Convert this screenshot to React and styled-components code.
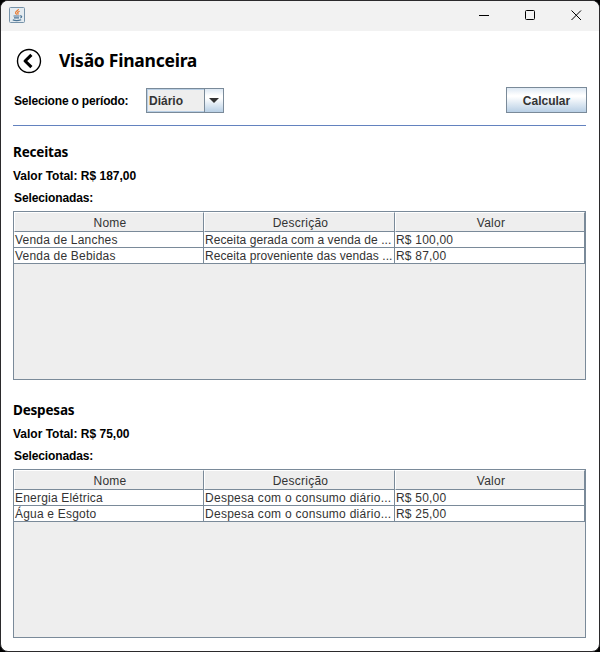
import React from "react";
import styled, { createGlobalStyle } from "styled-components";

const Global = createGlobalStyle`
  * { box-sizing: border-box; }
  html, body { margin: 0; background: #000; }
  body { width: 600px; height: 652px; overflow: hidden; font-family: "Liberation Sans", Arial, sans-serif; font-size: 12px; color: #333; }
`;

const Window = styled.div`
  width: 600px;
  height: 652px;
  display: flex;
  flex-direction: column;
  border: 1px solid #2b2a2c;
  border-radius: 8px;
  background: #fff;
  overflow: hidden;
`;

const TitleBar = styled.header`
  height: 30px;
  flex: none;
  display: flex;
  justify-content: space-between;
  padding: 6px 17px 0 8px;
  background: #f2f2f2;
`;

const Controls = styled.div`
  display: flex;
  gap: 35px;
  padding-top: 3px;
`;

const Content = styled.main`
  display: flex;
  flex-direction: column;
  padding: 17px 12px 0;
`;

const Heading = styled.div`
  display: flex;
  align-items: flex-start;
  height: 26px;
  padding-left: 3px;
`;

const Title = styled.h1`
  margin: 0 0 0 17px;
  font: 700 17.5px/24px "Noto Sans", sans-serif;
  letter-spacing: -0.25px;
  color: #000;
  white-space: nowrap;
`;

const Toolbar = styled.div`
  display: flex;
  height: 26px;
  margin-top: 13px;
  align-items: center;
`;

const Label = styled.div`
  height: 14px;
  line-height: 14px;
  margin-top: ${(p) => p.$top || 0}px;
  padding-left: ${(p) => p.$indent || 0}px;
  letter-spacing: ${(p) => p.$spacing || 0}px;
  font-weight: 700;
  color: #000;
  white-space: nowrap;
`;

const PeriodLabel = styled(Label)`
  width: 133px;
`;

const Combo = styled.div`
  display: flex;
  width: 78px;
  height: 25px;
  margin-top: 1px;
  border: 1px solid #7a8a99;
  background: #eee;
  box-shadow: inset 0 0 0 1px #b8cfe5;
  font-weight: 700;
  line-height: 24px;
`;

const ComboValue = styled.span`
  flex: 1;
  padding-left: 2px;
`;

const ComboArrow = styled.span`
  display: flex;
  align-items: center;
  justify-content: center;
  width: 19px;
  border-left: 1px solid #7a8a99;
  background: linear-gradient(#dde8f3, #fff 30%, #fff 40%, #b8cfe5);
`;

const Button = styled.button`
  width: 81px;
  height: 26px;
  margin-left: auto;
  padding: 2px 0 0;
  border: 1px solid #7a8a99;
  background: linear-gradient(#dde8f3, #fff 30%, #fff 36%, #b8cfe5);
  font: 700 12px "Liberation Sans", Arial, sans-serif;
  color: #333;
`;

const Rule = styled.hr`
  width: 573px;
  height: 1px;
  margin: 12px 0 0;
  border: 0;
  background: #6382bf;
`;

const Section = styled.section`
  height: 258px;
  padding-top: 16px;
`;

const SectionTitle = styled.h2`
  margin: 0;
  height: 21px;
  font: 700 13.5px/20px "Noto Sans", sans-serif;
  letter-spacing: -0.2px;
  color: #000;
`;

const TablePane = styled.div`
  width: 573px;
  height: 169px;
  margin-top: 6px;
  border: 1px solid #7a8a99;
  background: #eee;
`;

const Row = styled.div`
  display: grid;
  grid-template-columns: 190px 191px 190px;
  width: 571px;
`;

const HeadCell = styled.div`
  height: 20px;
  padding-left: 2px;
  border: solid;
  border-width: 1px;
  border-color: #fff #7a8a99 #7a8a99 #fff;
  text-align: center;
  line-height: 20px;
  letter-spacing: 0.25px;
`;

const Cell = styled.div`
  height: 16px;
  padding-left: 1px;
  border-right: 1px solid #7a8a99;
  border-bottom: 1px solid #7a8a99;
  background: #fff;
  line-height: 16px;
  letter-spacing: ${(p) => p.$spacing ?? 0.2}px;
  white-space: nowrap;
  overflow: hidden;
`;

const JavaIcon = () => (
  <svg width="16" height="16" viewBox="0 0 16 16" fill="none">
    <rect x=".5" y=".5" width="15" height="15" rx="1" fill="#e4ebf0" stroke="#7692a9" />
    <path d="M9.300 2c.6 1.500-3.200 2.200-2.700 4 .2.700.9 1 1.100 1.700M10.600 4.200C8.700 5 8.300 5.500 8.900 6.300c.3.500.2 1-.2 1.400" stroke="#e8762a" strokeWidth="1.200" />
    <path d="M4.500 9h6M5 10.800h5M3.800 12.900c2 .7 6.200.6 8.400-.2M11 9c2.200-.4 2.200 1.400.2 2" stroke="#4c7596" strokeWidth="1.150" />
  </svg>
);

const BackIcon = () => (
  <svg width="26" height="26" viewBox="0 0 26 26" fill="none" stroke="#000">
    <circle cx="13" cy="13" r="11.500" strokeWidth="1.400" />
    <path d="M15.400 6.900L9.100 13l6.300 6.100" strokeWidth="3.100" strokeLinecap="butt" strokeLinejoin="round" />
  </svg>
);

const ControlIcon = ({ children }) => (
  <svg width="11" height="11" viewBox="0 0 11 11" fill="none" stroke="#000">{children}</svg>
);

const sections = [
  { title: "Receitas", total: "Valor Total: R$ 187,00", rows: [
    { name: "Venda de Lanches", description: "Receita gerada com a venda de ...", spacing: 0.09, value: "R$ 100,00" },
    { name: "Venda de Bebidas", description: "Receita proveniente das vendas ...", spacing: 0.08, value: "R$ 87,00" },
  ] },
  { title: "Despesas", total: "Valor Total: R$ 75,00", rows: [
    { name: "Energia Elétrica", description: "Despesa com o consumo diário...", spacing: 0.27, value: "R$ 50,00" },
    { name: "Água e Esgoto", description: "Despesa com o consumo diário...", spacing: 0.27, value: "R$ 25,00" },
  ] },
];

export default function App() {
  return (
    <>
      <Global />
      <Window>
        <TitleBar>
          <JavaIcon />
          <Controls>
            <ControlIcon><path d="M0 5.500h10" /></ControlIcon>
            <ControlIcon><rect x=".5" y=".5" width="9" height="9" rx="1" /></ControlIcon>
            <ControlIcon><path d="M.5.500l9.500 9.500M10 .5L.5 10" /></ControlIcon>
          </Controls>
        </TitleBar>
        <Content>
          <Heading><BackIcon /><Title>Visão Financeira</Title></Heading>
          <Toolbar>
            <PeriodLabel $indent={1} $top={1} $spacing={-0.18}>Selecione o período:</PeriodLabel>
            <Combo>
              <ComboValue>Diário</ComboValue>
              <ComboArrow><svg width="10" height="5"><path d="M0 0h10L5 5z" fill="#333" /></svg></ComboArrow>
            </Combo>
            <Button>Calcular</Button>
          </Toolbar>
          <Rule />
          {sections.map((s) => (
            <Section key={s.title}>
              <SectionTitle>{s.title}</SectionTitle>
              <Label $top={6}>{s.total}</Label>
              <Label $top={8} $indent={1} $spacing={-0.12}>Selecionadas:</Label>
              <TablePane>
                <Row>{["Nome", "Descrição", "Valor"].map((h) => <HeadCell key={h}>{h}</HeadCell>)}</Row>
                {s.rows.map((r) => (
                  <Row key={r.name}>
                    <Cell>{r.name}</Cell>
                    <Cell $spacing={r.spacing}>{r.description}</Cell>
                    <Cell>{r.value}</Cell>
                  </Row>
                ))}
              </TablePane>
            </Section>
          ))}
        </Content>
      </Window>
    </>
  );
}
